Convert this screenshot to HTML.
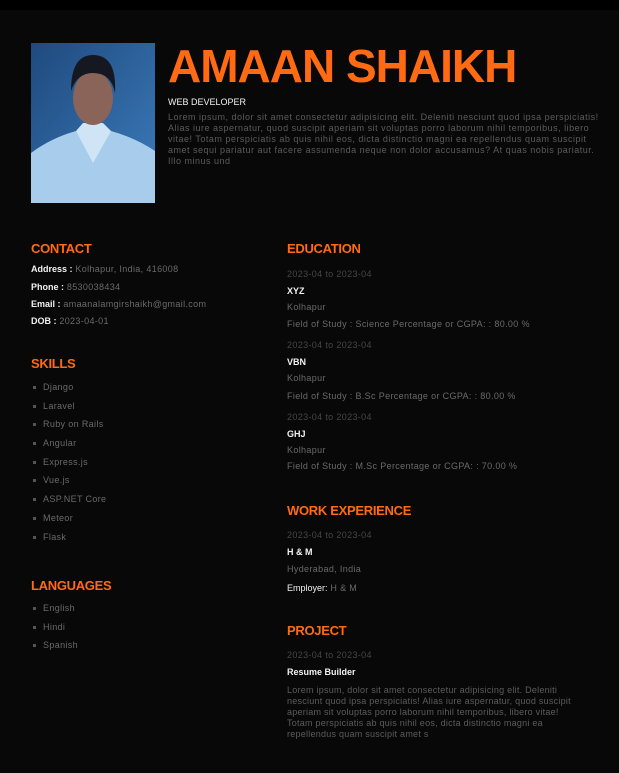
<!DOCTYPE html>
<html><head><meta charset="utf-8"><style>
*{margin:0;padding:0;box-sizing:border-box}
body{width:619px;height:773px;background:#080808;font-family:"Liberation Sans",sans-serif;position:relative;overflow:hidden}
.t{position:absolute;white-space:nowrap;font-size:9px;line-height:12px;color:#6a6a6a;letter-spacing:0.35px}
.p{position:absolute;white-space:nowrap;font-size:9px;line-height:11px;color:#5c5c5c;letter-spacing:0.25px}
.h{position:absolute;white-space:nowrap;font-size:13px;line-height:16px;font-weight:bold;color:#ff6a13;letter-spacing:-0.3px}
.w{color:#f2f2f2;font-weight:bold;letter-spacing:0}
.d{color:#464646}
.b{position:absolute;width:3px;height:3px;background:#555;left:33px}
</style></head><body>
<div style="position:absolute;left:0;top:0;width:619px;height:10px;background:#000"></div>
<svg style="position:absolute;left:31px;top:43px" width="124" height="160" viewBox="0 0 124 160">
<defs><linearGradient id="bg" x1="0" y1="0" x2="1" y2="1"><stop offset="0" stop-color="#1f4a7e"/><stop offset="1" stop-color="#3c7cbc"/></linearGradient></defs>
<rect width="124" height="160" fill="url(#bg)"/>
<path d="M0 160 L0 110 Q20 95 45 88 L62 100 L80 88 Q105 95 124 108 L124 160Z" fill="#a8cdec"/>
<path d="M45 88 L62 120 L80 88 L72 80 L52 80Z" fill="#cfe5f6"/>
<ellipse cx="62" cy="55" rx="20" ry="27" fill="#8a6458"/>
<path d="M40 48 Q40 12 62 12 Q86 12 84 50 Q80 30 62 30 Q46 30 40 48Z" fill="#151820"/>
</svg>
<div style="position:absolute;left:168px;top:40px;font-size:46px;line-height:52px;font-weight:bold;color:#ff6a13;letter-spacing:-1px;white-space:nowrap">AMAAN SHAIKH</div>
<div class="t" style="left:168px;top:96px;color:#f2f2f2;letter-spacing:0">WEB DEVELOPER</div>
<div class="p" style="left:168px;top:112px;letter-spacing:0.5px">Lorem ipsum, dolor sit amet consectetur adipisicing elit. Deleniti nesciunt quod ipsa perspiciatis!<br>Alias iure aspernatur, quod suscipit aperiam sit voluptas porro laborum nihil temporibus, libero<br>vitae! Totam perspiciatis ab quis nihil eos, dicta distinctio magni ea repellendus quam suscipit<br>amet sequi pariatur aut facere assumenda neque non dolor accusamus? At quas nobis pariatur.<br>Illo minus und</div>

<div class="h" style="left:31px;top:241px">CONTACT</div>
<div class="t" style="left:31px;top:263px"><span class="w">Address :</span> Kolhapur, India, 416008</div>
<div class="t" style="left:31px;top:281px"><span class="w">Phone :</span> 8530038434</div>
<div class="t" style="left:31px;top:298px"><span class="w">Email :</span> amaanalamgirshaikh@gmail.com</div>
<div class="t" style="left:31px;top:315px"><span class="w">DOB :</span> 2023-04-01</div>

<div class="h" style="left:31px;top:356px">SKILLS</div>
<div class="b" style="top:386px"></div><div class="t" style="left:43px;top:381px">Django</div>
<div class="b" style="top:405px"></div><div class="t" style="left:43px;top:400px">Laravel</div>
<div class="b" style="top:423px"></div><div class="t" style="left:43px;top:418px">Ruby on Rails</div>
<div class="b" style="top:442px"></div><div class="t" style="left:43px;top:437px">Angular</div>
<div class="b" style="top:461px"></div><div class="t" style="left:43px;top:456px">Express.js</div>
<div class="b" style="top:479px"></div><div class="t" style="left:43px;top:474px">Vue.js</div>
<div class="b" style="top:498px"></div><div class="t" style="left:43px;top:493px">ASP.NET Core</div>
<div class="b" style="top:517px"></div><div class="t" style="left:43px;top:512px">Meteor</div>
<div class="b" style="top:536px"></div><div class="t" style="left:43px;top:531px">Flask</div>

<div class="h" style="left:31px;top:578px">LANGUAGES</div>
<div class="b" style="top:607px"></div><div class="t" style="left:43px;top:602px">English</div>
<div class="b" style="top:626px"></div><div class="t" style="left:43px;top:621px">Hindi</div>
<div class="b" style="top:644px"></div><div class="t" style="left:43px;top:639px">Spanish</div>

<div class="h" style="left:287px;top:241px">EDUCATION</div>
<div class="t d" style="left:287px;top:268px">2023-04 to 2023-04</div>
<div class="t w" style="left:287px;top:285px">XYZ</div>
<div class="t" style="left:287px;top:301px">Kolhapur</div>
<div class="t" style="left:287px;top:318px">Field of Study : Science Percentage or CGPA: : 80.00 %</div>
<div class="t d" style="left:287px;top:339px">2023-04 to 2023-04</div>
<div class="t w" style="left:287px;top:356px">VBN</div>
<div class="t" style="left:287px;top:372px">Kolhapur</div>
<div class="t" style="left:287px;top:390px">Field of Study : B.Sc Percentage or CGPA: : 80.00 %</div>
<div class="t d" style="left:287px;top:411px">2023-04 to 2023-04</div>
<div class="t w" style="left:287px;top:428px">GHJ</div>
<div class="t" style="left:287px;top:444px">Kolhapur</div>
<div class="t" style="left:287px;top:460px">Field of Study : M.Sc Percentage or CGPA: : 70.00 %</div>

<div class="h" style="left:287px;top:503px">WORK EXPERIENCE</div>
<div class="t d" style="left:287px;top:529px">2023-04 to 2023-04</div>
<div class="t w" style="left:287px;top:546px">H &amp; M</div>
<div class="t" style="left:287px;top:563px">Hyderabad, India</div>
<div class="t" style="left:287px;top:582px"><span style="color:#f2f2f2;letter-spacing:0">Employer:</span> H &amp; M</div>

<div class="h" style="left:287px;top:623px">PROJECT</div>
<div class="t d" style="left:287px;top:649px">2023-04 to 2023-04</div>
<div class="t w" style="left:287px;top:666px">Resume Builder</div>
<div class="p" style="left:287px;top:685px">Lorem ipsum, dolor sit amet consectetur adipisicing elit. Deleniti<br>nesciunt quod ipsa perspiciatis! Alias iure aspernatur, quod suscipit<br>aperiam sit voluptas porro laborum nihil temporibus, libero vitae!<br>Totam perspiciatis ab quis nihil eos, dicta distinctio magni ea<br>repellendus quam suscipit amet s</div>
</body></html>
